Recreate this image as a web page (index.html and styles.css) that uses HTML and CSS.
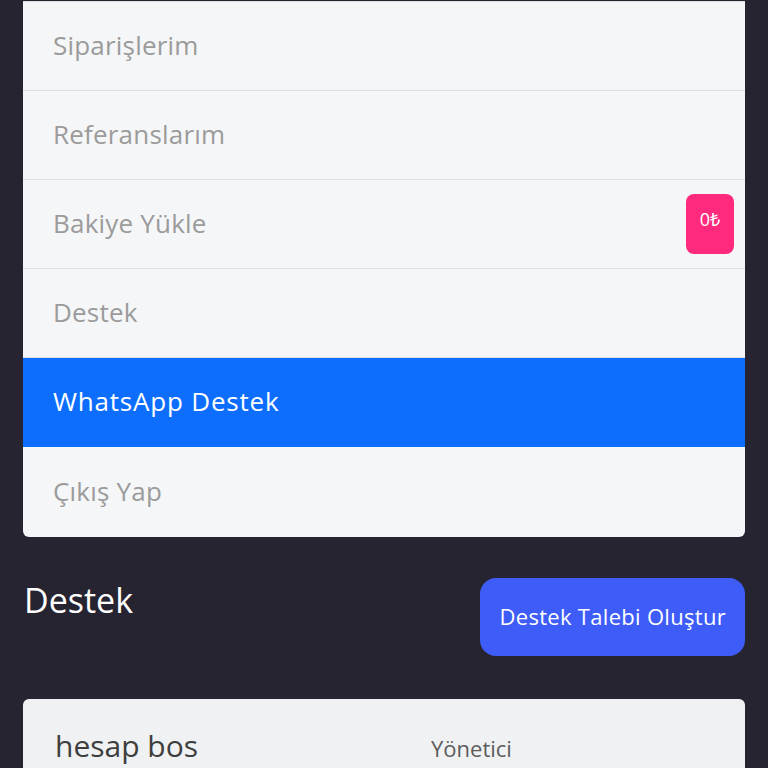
FILE: index.html
```html
<!DOCTYPE html>
<html lang="tr">
<head>
<meta charset="utf-8">
<title>Destek</title>
<link rel="stylesheet" href="styles.css">
</head>
<body>
<div class="page">
  <ul class="menu">
    <li class="menu-item">Siparişlerim</li>
    <li class="menu-item">Referanslarım</li>
    <li class="menu-item has-badge">Bakiye Yükle <span class="badge">0₺</span></li>
    <li class="menu-item">Destek</li>
    <li class="menu-item active">WhatsApp Destek</li>
    <li class="menu-item last">Çıkış Yap</li>
  </ul>

  <div class="section-head">
    <h2 class="title">Destek</h2>
    <button class="btn">Destek Talebi Oluştur</button>
  </div>

  <div class="ticket">
    <div class="ticket-row">
      <span class="ticket-name">hesap bos</span>
      <span class="ticket-role">Yönetici</span>
    </div>
  </div>
</div>
</body>
</html>
```

FILE: styles.css
```css
* { box-sizing: border-box; }
html, body {
  margin: 0;
  padding: 0;
  background: #262431;
  font-family: "Open Sans", "Noto Sans", sans-serif;
}
.page {
  padding: 1px 23px 0 23px;
  height: 768px;
  overflow: hidden;
}
.menu {
  list-style: none;
  margin: 0;
  padding: 0;
  background: #f5f6f7;
  border-top: 1px solid #dddfe1;
  border-radius: 0 0 6px 6px;
  overflow: hidden;
}
.menu-item {
  display: flex;
  align-items: center;
  justify-content: space-between;
  height: 89px;
  padding: 0 11px 3px 30px;
  border-bottom: 1px solid #dddfe1;
  font-size: 26px;
  letter-spacing: 0.2px;
  color: #9b9b9b;
}
.menu-item.last { border-bottom: none; height: 90px; }
.menu-item.active {
  background: #0d6efd;
  color: #ffffff;
  border-bottom-color: #0d6efd;
  letter-spacing: 0.8px;
}
.badge {
  display: block;
  width: 48px;
  height: 60px;
  margin-top: 3px;
  padding-top: 13px;
  text-align: center;
  font-size: 18px;
  line-height: 24px;
  letter-spacing: 0;
  color: #ffffff;
  background: #ff2a7d;
  border-radius: 8px;
}
.section-head {
  display: flex;
  justify-content: space-between;
  align-items: flex-start;
  padding-top: 41px;
}
.title {
  margin: 2px 0 0 1px;
  font-size: 34px;
  font-weight: 400;
  color: #ffffff;
  line-height: 40px;
}
.btn {
  border: none;
  background: #3d5cf8;
  color: #ffffff;
  font-family: inherit;
  font-size: 22px;
  letter-spacing: 0.3px;
  height: 78px;
  padding: 0 19px 2px 19px;
  border-radius: 16px;
}
.ticket {
  margin-top: 43px;
  background: #f0f1f2;
  border-radius: 6px;
  height: 120px;
}
.ticket-row {
  display: grid;
  grid-template-columns: 376px 1fr;
  align-items: center;
  padding: 26px 0 0 32px;
}
.ticket-name {
  font-size: 30px;
  color: #3e3e3e;
}
.ticket-role {
  font-size: 22px;
  color: #5c5c5c;
  padding-top: 4px;
}
```
